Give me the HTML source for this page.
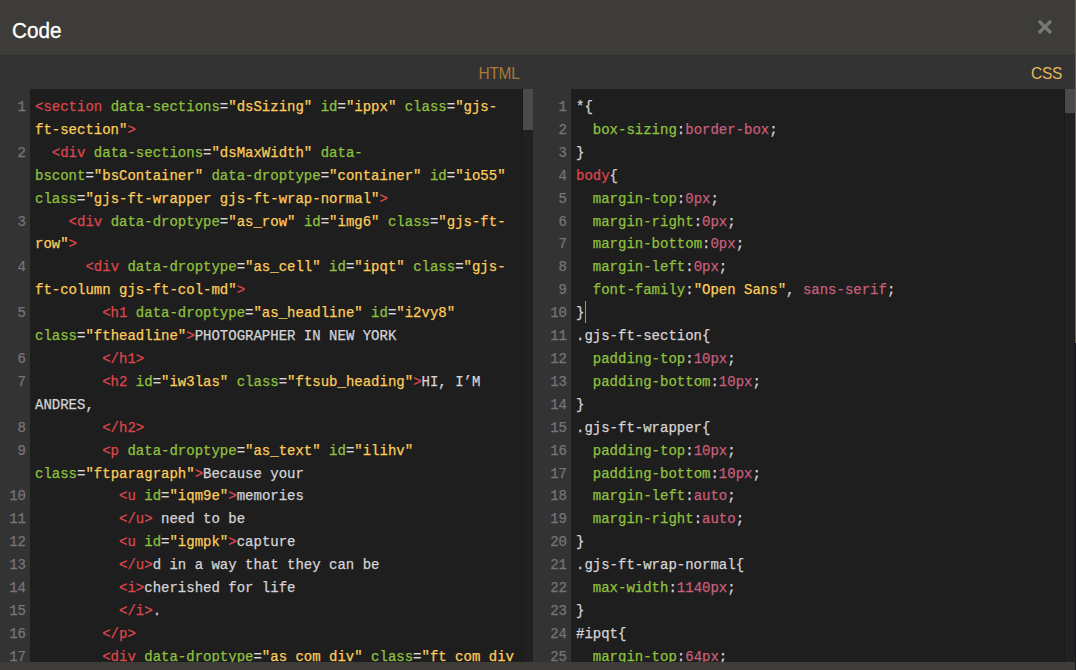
<!DOCTYPE html>
<html>
<head>
<meta charset="utf-8">
<title>Code</title>
<style>
html,body{margin:0;padding:0;}
body{width:1076px;height:670px;overflow:hidden;background:#3e3c38;position:relative;font-family:"Liberation Sans",sans-serif;}
#hdr{position:absolute;left:0;top:0;width:1076px;height:55px;background:#3e3c38;}
#title{position:absolute;left:11.7px;top:19px;font-size:21px;line-height:24px;color:#fff;transform:scale(0.985,1.03);transform-origin:0 19px;-webkit-text-stroke:0.3px #fff;}
#close{position:absolute;left:1037px;top:19px;width:16px;height:16px;}
#content{position:absolute;left:0;top:55px;width:1076px;height:607px;background:#333333;}
.lbl{position:absolute;top:65px;font-size:15.5px;line-height:17px;text-align:right;letter-spacing:-0.3px;transform:scaleY(1.08);transform-origin:100% 13.6px;}
#lblh{right:556.5px;color:#a87a38;}
#lblc{right:14px;color:#e5b757;}
.code{position:absolute;top:89px;height:573px;background:#1e1e1e;overflow:hidden;}
#lc{left:30px;width:503px;}
#rc{left:571px;width:505px;}
.rows{position:absolute;top:7px;left:0;font-family:"Liberation Mono",monospace;font-size:14px;line-height:22.92px;color:#d5d3d5;}
.rows .r{height:22.92px;white-space:pre;-webkit-text-stroke:0.25px currentColor;}
.code .rows{left:5px;}
.gut{position:absolute;top:89px;height:573px;overflow:hidden;}
.gut .rows{left:auto;right:0;text-align:right;color:#797379;}
#lg{left:0;width:26px;}
#rg{left:538px;width:29px;}
.t{color:#dd464c}.a{color:#8fc13e}.s{color:#fdcc59}.n{color:#c85e7c}
.thumb{position:absolute;background:#4a4a4a;}
#rborder{position:absolute;left:1075px;top:0;width:1px;height:343px;background:#6b6450;}
#rborder2{position:absolute;left:1075px;top:343px;width:1px;height:327px;background:#17171d;}
.track{position:absolute;top:89px;height:573px;width:10px;background:#212121;border-left:1px solid #1a1a1a;margin-left:-1px;}
#cursor{position:absolute;left:585px;top:301px;width:1px;height:22px;background:#989498;}
</style>
</head>
<body>
<div id="hdr">
  <div id="title">Code</div>
  <svg id="close" viewBox="0 0 16 16"><path d="M1.8 1.8 L14 14 M14 1.8 L1.8 14" stroke="#787878" stroke-width="3.3" fill="none"/></svg>
</div>
<div id="content"></div>
<div style="position:absolute;left:0;top:55px;width:1076px;height:1px;background:#2e2e2d"></div>
<div style="position:absolute;left:533px;top:55px;width:1px;height:34px;background:#2e2e2e"></div>
<div class="lbl" id="lblh">HTML</div>
<div class="lbl" id="lblc">CSS</div>

<div class="gut" id="lg"><div class="rows">
<div class="r">1</div>
<div class="r">&nbsp;</div>
<div class="r">2</div>
<div class="r">&nbsp;</div>
<div class="r">&nbsp;</div>
<div class="r">3</div>
<div class="r">&nbsp;</div>
<div class="r">4</div>
<div class="r">&nbsp;</div>
<div class="r">5</div>
<div class="r">&nbsp;</div>
<div class="r">6</div>
<div class="r">7</div>
<div class="r">&nbsp;</div>
<div class="r">8</div>
<div class="r">9</div>
<div class="r">&nbsp;</div>
<div class="r">10</div>
<div class="r">11</div>
<div class="r">12</div>
<div class="r">13</div>
<div class="r">14</div>
<div class="r">15</div>
<div class="r">16</div>
<div class="r">17</div>
</div></div>
<div class="code" id="lc"><div class="rows">
<div class="r"><span class="t">&lt;section</span> <span class="a">data-sections</span>=<span class="s">"dsSizing"</span> <span class="a">id</span>=<span class="s">"ippx"</span> <span class="a">class</span>=<span class="s">"gjs-</span></div>
<div class="r"><span class="s">ft-section"</span><span class="t">&gt;</span></div>
<div class="r">  <span class="t">&lt;div</span> <span class="a">data-sections</span>=<span class="s">"dsMaxWidth"</span> <span class="a">data-</span></div>
<div class="r"><span class="a">bscont</span>=<span class="s">"bsContainer"</span> <span class="a">data-droptype</span>=<span class="s">"container"</span> <span class="a">id</span>=<span class="s">"io55"</span></div>
<div class="r"><span class="a">class</span>=<span class="s">"gjs-ft-wrapper gjs-ft-wrap-normal"</span><span class="t">&gt;</span></div>
<div class="r">    <span class="t">&lt;div</span> <span class="a">data-droptype</span>=<span class="s">"as_row"</span> <span class="a">id</span>=<span class="s">"img6"</span> <span class="a">class</span>=<span class="s">"gjs-ft-</span></div>
<div class="r"><span class="s">row"</span><span class="t">&gt;</span></div>
<div class="r">      <span class="t">&lt;div</span> <span class="a">data-droptype</span>=<span class="s">"as_cell"</span> <span class="a">id</span>=<span class="s">"ipqt"</span> <span class="a">class</span>=<span class="s">"gjs-</span></div>
<div class="r"><span class="s">ft-column gjs-ft-col-md"</span><span class="t">&gt;</span></div>
<div class="r">        <span class="t">&lt;h1</span> <span class="a">data-droptype</span>=<span class="s">"as_headline"</span> <span class="a">id</span>=<span class="s">"i2vy8"</span></div>
<div class="r"><span class="a">class</span>=<span class="s">"ftheadline"</span><span class="t">&gt;</span>PHOTOGRAPHER IN NEW YORK</div>
<div class="r">        <span class="t">&lt;/h1</span><span class="t">&gt;</span></div>
<div class="r">        <span class="t">&lt;h2</span> <span class="a">id</span>=<span class="s">"iw3las"</span> <span class="a">class</span>=<span class="s">"ftsub_heading"</span><span class="t">&gt;</span>HI, I’M</div>
<div class="r">ANDRES,</div>
<div class="r">        <span class="t">&lt;/h2</span><span class="t">&gt;</span></div>
<div class="r">        <span class="t">&lt;p</span> <span class="a">data-droptype</span>=<span class="s">"as_text"</span> <span class="a">id</span>=<span class="s">"ilihv"</span></div>
<div class="r"><span class="a">class</span>=<span class="s">"ftparagraph"</span><span class="t">&gt;</span>Because your</div>
<div class="r">          <span class="t">&lt;u</span> <span class="a">id</span>=<span class="s">"iqm9e"</span><span class="t">&gt;</span>memories</div>
<div class="r">          <span class="t">&lt;/u</span><span class="t">&gt;</span> need to be</div>
<div class="r">          <span class="t">&lt;u</span> <span class="a">id</span>=<span class="s">"igmpk"</span><span class="t">&gt;</span>capture</div>
<div class="r">          <span class="t">&lt;/u</span><span class="t">&gt;</span>d in a way that they can be</div>
<div class="r">          <span class="t">&lt;i</span><span class="t">&gt;</span>cherished for life</div>
<div class="r">          <span class="t">&lt;/i</span><span class="t">&gt;</span>.</div>
<div class="r">        <span class="t">&lt;/p</span><span class="t">&gt;</span></div>
<div class="r">        <span class="t">&lt;div</span> <span class="a">data-droptype</span>=<span class="s">"as_com_div"</span> <span class="a">class</span>=<span class="s">"ft_com_div</span></div>
</div></div>
<div class="track" style="left:523px"></div>
<div class="thumb" style="left:523px;top:89px;width:10px;height:41px;"></div>

<div class="gut" id="rg"><div class="rows">
<div class="r">1</div>
<div class="r">2</div>
<div class="r">3</div>
<div class="r">4</div>
<div class="r">5</div>
<div class="r">6</div>
<div class="r">7</div>
<div class="r">8</div>
<div class="r">9</div>
<div class="r">10</div>
<div class="r">11</div>
<div class="r">12</div>
<div class="r">13</div>
<div class="r">14</div>
<div class="r">15</div>
<div class="r">16</div>
<div class="r">17</div>
<div class="r">18</div>
<div class="r">19</div>
<div class="r">20</div>
<div class="r">21</div>
<div class="r">22</div>
<div class="r">23</div>
<div class="r">24</div>
<div class="r">25</div>
</div></div>
<div class="code" id="rc"><div class="rows">
<div class="r">*{</div>
<div class="r">  <span class="a">box-sizing</span>:<span class="n">border-box</span>;</div>
<div class="r">}</div>
<div class="r"><span class="t">body</span>{</div>
<div class="r">  <span class="a">margin-top</span>:<span class="n">0px</span>;</div>
<div class="r">  <span class="a">margin-right</span>:<span class="n">0px</span>;</div>
<div class="r">  <span class="a">margin-bottom</span>:<span class="n">0px</span>;</div>
<div class="r">  <span class="a">margin-left</span>:<span class="n">0px</span>;</div>
<div class="r">  <span class="a">font-family</span>:<span class="s">"Open Sans"</span>, <span class="n">sans-serif</span>;</div>
<div class="r">}</div>
<div class="r">.gjs-ft-section{</div>
<div class="r">  <span class="a">padding-top</span>:<span class="n">10px</span>;</div>
<div class="r">  <span class="a">padding-bottom</span>:<span class="n">10px</span>;</div>
<div class="r">}</div>
<div class="r">.gjs-ft-wrapper{</div>
<div class="r">  <span class="a">padding-top</span>:<span class="n">10px</span>;</div>
<div class="r">  <span class="a">padding-bottom</span>:<span class="n">10px</span>;</div>
<div class="r">  <span class="a">margin-left</span>:<span class="n">auto</span>;</div>
<div class="r">  <span class="a">margin-right</span>:<span class="n">auto</span>;</div>
<div class="r">}</div>
<div class="r">.gjs-ft-wrap-normal{</div>
<div class="r">  <span class="a">max-width</span>:<span class="n">1140px</span>;</div>
<div class="r">}</div>
<div class="r">#ipqt{</div>
<div class="r">  <span class="a">margin-top</span>:<span class="n">64px</span>;</div>
</div></div>
<div class="track" style="left:1065px"></div>
<div class="thumb" style="left:1065px;top:89px;width:10px;height:24px;"></div>
<div id="cursor"></div>
<div id="rborder"></div>
<div id="rborder2"></div>
</body>
</html>
